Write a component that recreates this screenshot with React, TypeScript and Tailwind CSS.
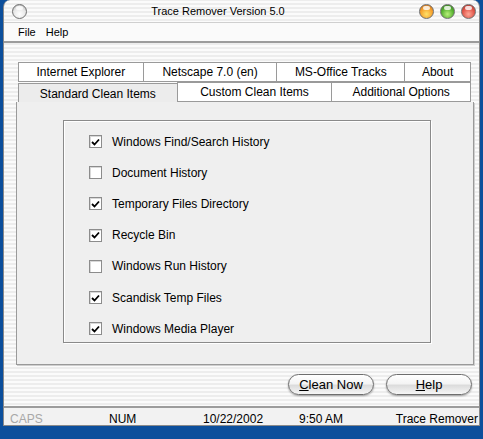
import React from 'react';

const stripes =
  'bg-[image:repeating-linear-gradient(0deg,#ededed_0px,#ededed_2px,#fbfbfb_2px,#fbfbfb_4px)]';

const items = [
  { label: 'Windows Find/Search History', checked: true },
  { label: 'Document History', checked: false },
  { label: 'Temporary Files Directory', checked: true },
  { label: 'Recycle Bin', checked: true },
  { label: 'Windows Run History', checked: false },
  { label: 'Scandisk Temp Files', checked: true },
  { label: 'Windows Media Player', checked: true },
];

function Light({ color }: { color: 'orange' | 'green' | 'red' | 'gray' }) {
  const fill = {
    orange: 'bg-[radial-gradient(circle_at_50%_70%,#ffe26a_0%,#f5a02c_55%,#c0621a_100%)]',
    green: 'bg-[radial-gradient(circle_at_50%_70%,#b8f07a_0%,#55b030_55%,#2d7418_100%)]',
    red: 'bg-[radial-gradient(circle_at_50%_70%,#ffa898_0%,#e05548_55%,#a52a22_100%)]',
    gray: 'bg-[radial-gradient(circle_at_50%_70%,#ffffff_0%,#e6e6e6_55%,#a8a8a8_100%)]',
  }[color];
  return (
    <div className={`relative w-[15px] h-[15px] rounded-full border border-[#6f6f6f] ${fill}`}>
      <div className="absolute left-[3px] top-[1px] w-[7px] h-[4px] rounded-full bg-white/80" />
    </div>
  );
}

function Checkbox({ checked }: { checked: boolean }) {
  return (
    <div className="w-[13px] h-[13px] border border-[#8c8c8c] bg-white flex items-center justify-center shadow-[inset_1px_1px_0_#d8d8d8]">
      {checked && (
        <svg width="9" height="8" viewBox="0 0 9 8">
          <path d="M1 4 L3.5 6.5 L8 1.5" fill="none" stroke="#000" strokeWidth="1.8" />
        </svg>
      )}
    </div>
  );
}

function Tab({ label, width, selected = false }: { label: string; width: number; selected?: boolean }) {
  return (
    <div
      style={{ width }}
      className={`flex items-center justify-center border border-[#9a9a9a] -ml-px first:ml-0 ${
        selected ? 'bg-[#ececec] h-[19px] border-b-0 pt-[2px]' : 'bg-white h-[20px]'
      }`}
    >
      {label}
    </div>
  );
}

function AquaButton({ children }: { children: React.ReactNode }) {
  return (
    <button className="w-[86px] h-[21px] rounded-full border border-[#6e6e6e] bg-[linear-gradient(180deg,#ffffff_0%,#f4f4f4_45%,#dcdcdc_55%,#f6f6f6_100%)] shadow-[0_1px_2px_rgba(0,0,0,0.35)] text-[13px] text-black leading-none">
      {children}
    </button>
  );
}

export default function App() {
  return (
    <div
      className="w-[483px] h-[439px] bg-[#0c4f9c] overflow-hidden text-[12px] text-black"
      style={{ fontFamily: '"Liberation Sans", Arial, sans-serif' }}
    >
      <div className={`ml-[3px] w-[477px] h-[426px] rounded-t-[7px] border-x border-b border-[#8a8a8a] flex flex-col ${stripes}`}>
        {/* Title bar */}
        <div className="h-[22px] flex items-center pl-[8px] pr-[3px]">
          <Light color="gray" />
          <div className="flex-1 text-center text-[11px] pt-[1px] pr-[10px]">Trace Remover Version 5.0</div>
          <div className="flex items-center gap-[6px]">
            <Light color="orange" />
            <Light color="green" />
            <Light color="red" />
          </div>
        </div>
        {/* Menu */}
        <div className="h-[21px] flex items-center gap-[10px] pl-[14px] text-[11px] border-t border-[#cfcfcf] border-b-2 border-b-[#9c9c9c] bg-[#fafafa]">
          <span>File</span>
          <span>Help</span>
        </div>
        {/* Tabs area */}
        <div className="flex-1 flex flex-col pt-[19px] pl-[12px]">
          <div className="ml-[2px] flex w-[453px] h-[21px]">
            <Tab label="Internet Explorer" width={126} />
            <Tab label="Netscape 7.0 (en)" width={135} />
            <Tab label="MS-Office Tracks" width={129} />
            <Tab label="About" width={67} />
          </div>
          <div className="ml-[2px] flex w-[453px] -mt-px h-[20px] items-end">
            <Tab label="Standard Clean Items" width={160} selected />
            <Tab label="Custom Clean Items" width={156} />
            <Tab label="Additional Options" width={140} />
          </div>
          <div className="w-[458px] h-[263px] bg-[#efefef] border border-t-0 border-[#9a9a9a] shadow-[1px_1px_0_#cfcfcf] pt-[18px] pl-[46px]">
            <div className="w-[368px] h-[223px] border border-[#8a8a8a] shadow-[inset_1px_1px_0_#ffffff,1px_1px_0_#ffffff] flex flex-col pt-[5px] pl-[25px] overflow-hidden">
              {items.map(item => (
                <div key={item.label} className="h-[31.2px] shrink-0 flex items-center gap-[10px]">
                  <Checkbox checked={item.checked} />
                  <span>{item.label}</span>
                </div>
              ))}
            </div>
          </div>
          <div className="flex justify-end gap-[12px] pr-[7px] mt-[9px]">
            <AquaButton>
              <span className="underline">C</span>lean Now
            </AquaButton>
            <AquaButton>
              <span className="underline">H</span>elp
            </AquaButton>
          </div>
        </div>
        {/* Status bar */}
        <div className="h-[19px] mt-auto border-t-2 border-[#9c9c9c] bg-[#f2f2f2] flex items-center pt-[4px] text-[12px]">
          <span className="w-[102px] pl-[6px] text-[#a8a8a8]">CAPS</span>
          <span className="w-[97px] pl-[3px]">NUM</span>
          <span className="w-[96px]">10/22/2002</span>
          <span className="w-[92px]">9:50 AM</span>
          <span className="flex-1 text-right pr-[1px]">Trace Remover</span>
        </div>
      </div>
    </div>
  );
}
